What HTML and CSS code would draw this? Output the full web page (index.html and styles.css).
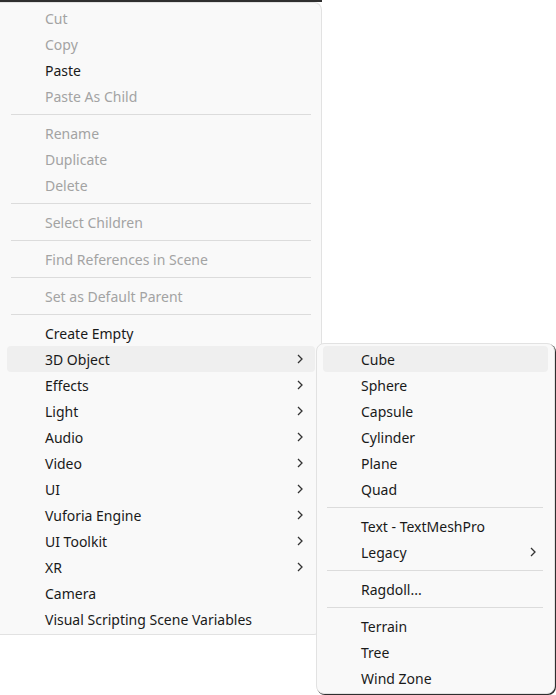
FILE: index.html
```html
<!DOCTYPE html>
<html>
<head>
<meta charset="utf-8">
<link rel="stylesheet" href="styles.css">
</head>
<body>
<div class="strip"></div>
<div class="menu main">
  <div class="item off">Cut</div>
  <div class="item off">Copy</div>
  <div class="item">Paste</div>
  <div class="item off">Paste As Child</div>
  <div class="sep"></div>
  <div class="item off">Rename</div>
  <div class="item off">Duplicate</div>
  <div class="item off">Delete</div>
  <div class="sep"></div>
  <div class="item off">Select Children</div>
  <div class="sep"></div>
  <div class="item off">Find References in Scene</div>
  <div class="sep"></div>
  <div class="item off">Set as Default Parent</div>
  <div class="sep"></div>
  <div class="item">Create Empty</div>
  <div class="item hover sub">3D Object<svg class="chev" viewBox="0 0 6 10"><path d="M1 1 L5 5 L1 9"/></svg></div>
  <div class="item sub">Effects<svg class="chev" viewBox="0 0 6 10"><path d="M1 1 L5 5 L1 9"/></svg></div>
  <div class="item sub">Light<svg class="chev" viewBox="0 0 6 10"><path d="M1 1 L5 5 L1 9"/></svg></div>
  <div class="item sub">Audio<svg class="chev" viewBox="0 0 6 10"><path d="M1 1 L5 5 L1 9"/></svg></div>
  <div class="item sub">Video<svg class="chev" viewBox="0 0 6 10"><path d="M1 1 L5 5 L1 9"/></svg></div>
  <div class="item sub">UI<svg class="chev" viewBox="0 0 6 10"><path d="M1 1 L5 5 L1 9"/></svg></div>
  <div class="item sub">Vuforia Engine<svg class="chev" viewBox="0 0 6 10"><path d="M1 1 L5 5 L1 9"/></svg></div>
  <div class="item sub">UI Toolkit<svg class="chev" viewBox="0 0 6 10"><path d="M1 1 L5 5 L1 9"/></svg></div>
  <div class="item sub">XR<svg class="chev" viewBox="0 0 6 10"><path d="M1 1 L5 5 L1 9"/></svg></div>
  <div class="item">Camera</div>
  <div class="item">Visual Scripting Scene Variables</div>
</div>
<div class="menu submenu">
  <div class="item hover">Cube</div>
  <div class="item">Sphere</div>
  <div class="item">Capsule</div>
  <div class="item">Cylinder</div>
  <div class="item">Plane</div>
  <div class="item">Quad</div>
  <div class="sep"></div>
  <div class="item">Text - TextMeshPro</div>
  <div class="item sub">Legacy<svg class="chev" viewBox="0 0 6 10"><path d="M1 1 L5 5 L1 9"/></svg></div>
  <div class="sep"></div>
  <div class="item">Ragdoll...</div>
  <div class="sep"></div>
  <div class="item">Terrain</div>
  <div class="item">Tree</div>
  <div class="item">Wind Zone</div>
</div>
</body>
</html>
```
FILE: styles.css
```css
html, body {
  margin: 0;
  padding: 0;
  background: #ffffff;
}
body {
  font-family: "Segoe UI", "Noto Sans", "Open Sans", sans-serif;
  font-size: 14px;
  color: #1a1a1a;
  width: 556px;
  height: 695px;
  overflow: hidden;
  position: relative;
}
.strip {
  width: 322px;
  height: 2px;
  background: #2f2f2f;
}
.menu {
  background: #f9f9f9;
  box-sizing: border-box;
  display: flex;
  flex-direction: column;
}
.main {
  width: 322px;
  border: 1px solid #e2e2e2;
  border-left: none;
  border-radius: 0 8px 8px 0;
  padding: 2px 0 2px 0;
}
.submenu {
  position: absolute;
  left: 316px;
  top: 343px;
  width: 239px;
  border: 1px solid #e2e2e2;
  border-radius: 8px;
  padding: 2px 0 2px 0;
  box-shadow: 1px 1px 0 #2f2f2f;
}
.item {
  box-sizing: border-box;
  height: 26px;
  padding-top: 1px;
  padding-left: 38px;
  margin: 0 6px 0 7px;
  border-radius: 4px;
  display: flex;
  align-items: center;
  white-space: nowrap;
}
.submenu .item {
  margin: 0 6px 0 6px;
}
.item.off {
  color: #a3a3a3;
}
.item.hover {
  background: #efefef;
}
.item.sub {
  justify-content: space-between;
  padding-right: 12px;
}
.chev {
  width: 6px;
  height: 10px;
  margin-top: -1px;
  fill: none;
  stroke: #333333;
  stroke-width: 1.3;
}
.sep {
  height: 1px;
  background: #dcdcdc;
  margin: 5px 10px 5px 11px;
}
.submenu .sep {
  margin: 5px 11px 5px 10px;
}
```
